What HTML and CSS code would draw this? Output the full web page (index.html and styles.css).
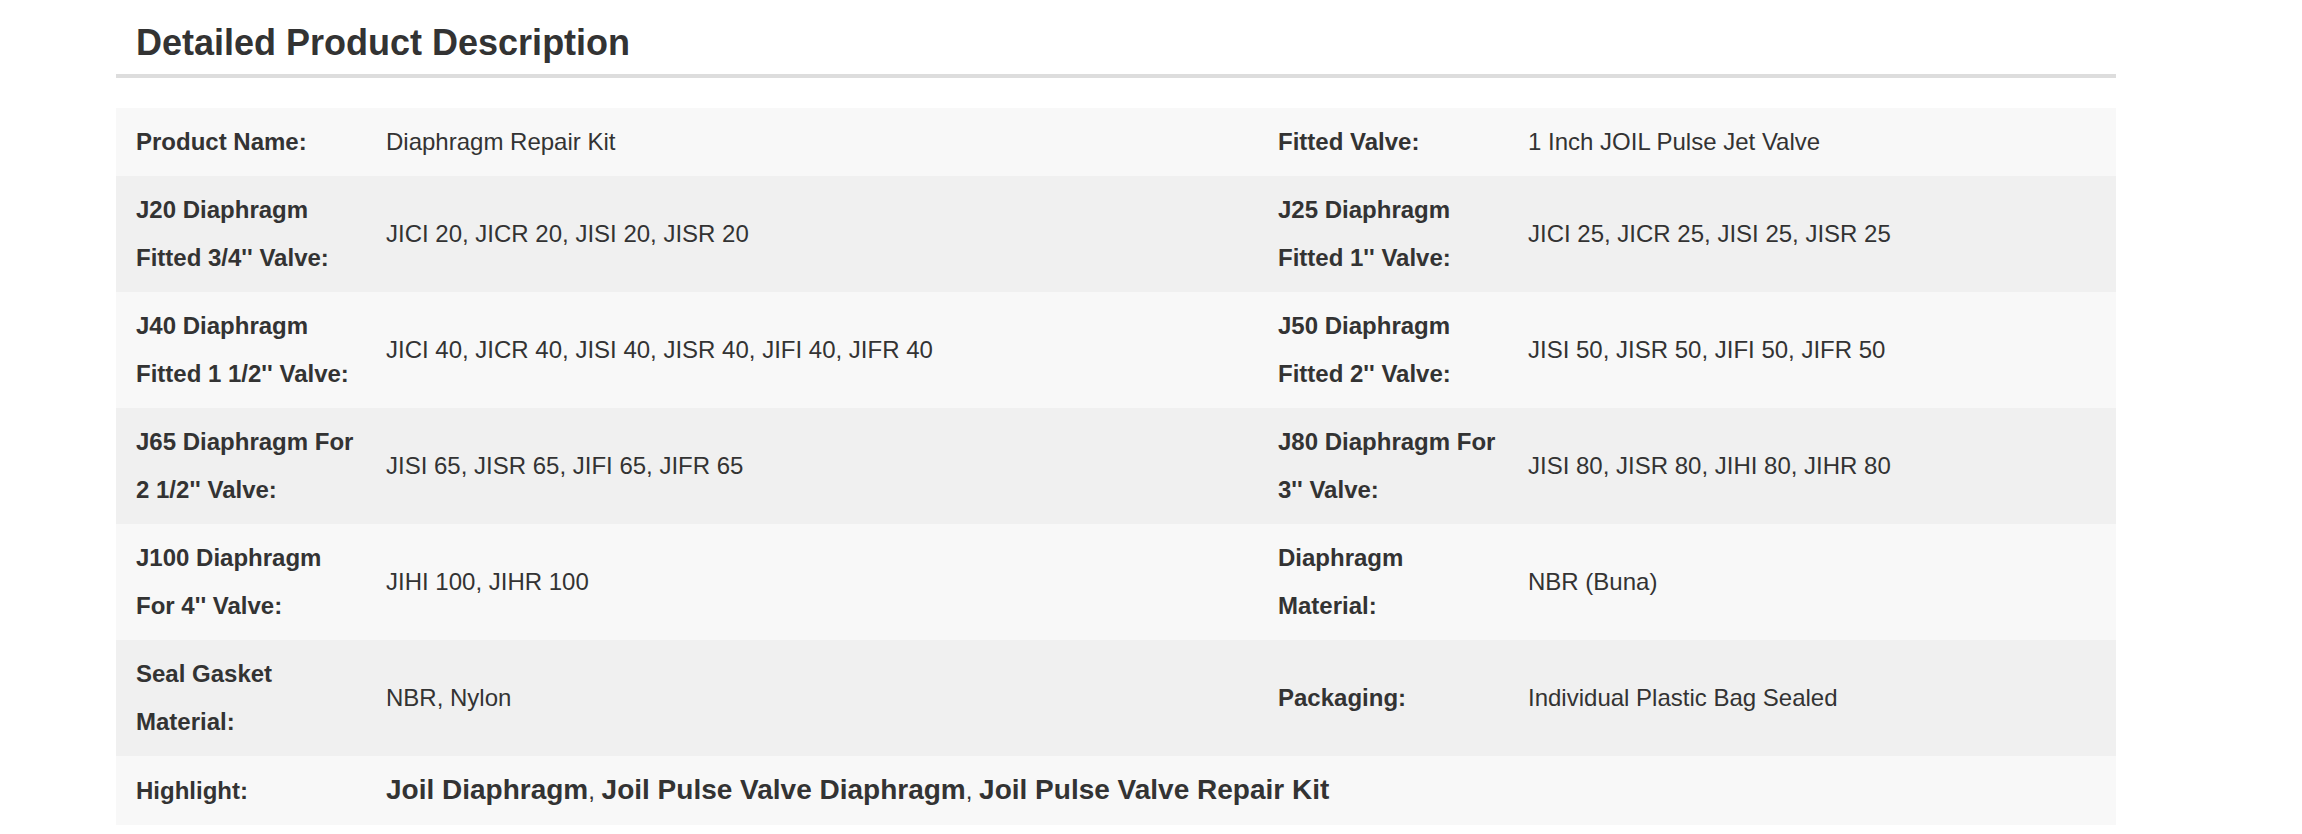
FILE: index.html
```html
<!DOCTYPE html>
<html lang="en">
<head>
<meta charset="utf-8">
<title>Detailed Product Description</title>
<link rel="stylesheet" href="styles.css">
</head>
<body>
<div class="detail">
  <h2 class="detail-title">Detailed Product Description</h2>
  <div class="spec-table">
    <div class="spec-row">
      <div class="spec-label">Product Name:</div>
      <div class="spec-value">Diaphragm Repair Kit</div>
      <div class="spec-label">Fitted Valve:</div>
      <div class="spec-value">1 Inch JOIL Pulse Jet Valve</div>
    </div>
    <div class="spec-row">
      <div class="spec-label">J20 Diaphragm Fitted 3/4'' Valve:</div>
      <div class="spec-value">JICI 20, JICR 20, JISI 20, JISR 20</div>
      <div class="spec-label">J25 Diaphragm Fitted 1'' Valve:</div>
      <div class="spec-value">JICI 25, JICR 25, JISI 25, JISR 25</div>
    </div>
    <div class="spec-row">
      <div class="spec-label">J40 Diaphragm Fitted 1 1/2'' Valve:</div>
      <div class="spec-value">JICI 40, JICR 40, JISI 40, JISR 40, JIFI 40, JIFR 40</div>
      <div class="spec-label">J50 Diaphragm Fitted 2'' Valve:</div>
      <div class="spec-value">JISI 50, JISR 50, JIFI 50, JIFR 50</div>
    </div>
    <div class="spec-row">
      <div class="spec-label">J65 Diaphragm For 2 1/2'' Valve:</div>
      <div class="spec-value">JISI 65, JISR 65, JIFI 65, JIFR 65</div>
      <div class="spec-label">J80 Diaphragm For 3'' Valve:</div>
      <div class="spec-value">JISI 80, JISR 80, JIHI 80, JIHR 80</div>
    </div>
    <div class="spec-row">
      <div class="spec-label">J100 Diaphragm For 4'' Valve:</div>
      <div class="spec-value">JIHI 100, JIHR 100</div>
      <div class="spec-label">Diaphragm Material:</div>
      <div class="spec-value">NBR (Buna)</div>
    </div>
    <div class="spec-row">
      <div class="spec-label">Seal Gasket Material:</div>
      <div class="spec-value">NBR, Nylon</div>
      <div class="spec-label">Packaging:</div>
      <div class="spec-value">Individual Plastic Bag Sealed</div>
    </div>
    <div class="spec-row">
      <div class="spec-label">Highlight:</div>
      <div class="spec-value spec-highlight"><a class="hl" href="#">Joil Diaphragm</a>, <a class="hl" href="#">Joil Pulse Valve Diaphragm</a>, <a class="hl" href="#">Joil Pulse Valve Repair Kit</a></div>
    </div>
  </div>
</div>
</body>
</html>
```

FILE: styles.css
```css
html, body {
  margin: 0;
  padding: 0;
  background: #ffffff;
}

body {
  font-family: "Liberation Sans", Arial, sans-serif;
  color: #333333;
}

.detail {
  width: 2000px;
  margin-left: 116px;
}

.detail-title {
  margin: 0;
  padding: 23px 20px 11px;
  font-size: 36px;
  line-height: 40px;
  font-weight: bold;
  color: #333333;
  border-bottom: 4px solid #dddddd;
}

.spec-table {
  margin-top: 30px;
}

.spec-row {
  display: grid;
  grid-template-columns: 250px 892px 250px 1fr;
  align-items: center;
  background: #f8f8f8;
}

.spec-row:nth-child(even) {
  background: #f0f0f0;
}

.spec-label,
.spec-value {
  padding: 10px 20px;
  font-size: 24px;
  line-height: 48px;
}

.spec-label {
  padding-right: 8px;
  font-weight: bold;
}

.spec-highlight {
  grid-column: 2 / 5;
}

.hl {
  font-size: 28px;
  font-weight: bold;
  color: #333333;
  text-decoration: none;
}
```
